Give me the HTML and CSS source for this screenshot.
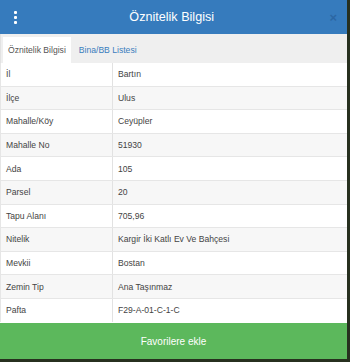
FILE: index.html
```html
<!DOCTYPE html>
<html lang="tr">
<head>
<meta charset="utf-8">
<title>Öznitelik Bilgisi</title>
<link rel="stylesheet" href="styles.css">
</head>
<body>
<div class="modal">
  <header class="modal-header">
    <span class="kebab"><i></i><i></i><i></i></span>
    <h1 class="title">Öznitelik Bilgisi</h1>
    <span class="close">×</span>
  </header>
  <nav class="tabs">
    <span class="tab active">Öznitelik Bilgisi</span>
    <span class="tab">Bina/BB Listesi</span>
  </nav>
  <table class="attr-table">
    <tbody>
      <tr><td>İl</td><td>Bartın</td></tr>
      <tr><td>İlçe</td><td>Ulus</td></tr>
      <tr><td>Mahalle/Köy</td><td>Ceyüpler</td></tr>
      <tr><td>Mahalle No</td><td>51930</td></tr>
      <tr><td>Ada</td><td>105</td></tr>
      <tr><td>Parsel</td><td>20</td></tr>
      <tr><td>Tapu Alanı</td><td>705,96</td></tr>
      <tr><td>Nitelik</td><td>Kargir İki Katlı Ev Ve Bahçesi</td></tr>
      <tr><td>Mevkii</td><td>Bostan</td></tr>
      <tr><td>Zemin Tip</td><td>Ana Taşınmaz</td></tr>
      <tr><td>Pafta</td><td>F29-A-01-C-1-C</td></tr>
    </tbody>
  </table>
  <button class="fav-btn">Favorilere ekle</button>
</div>
</body>
</html>
```
FILE: styles.css
```css
html, body {
  margin: 0;
  padding: 0;
}
body {
  width: 350px;
  height: 362px;
  background: #27301f;
  font-family: "Liberation Sans", Arial, sans-serif;
  overflow: hidden;
}
.modal {
  width: 347px;
  height: 359px;
  background: #fff;
  display: flex;
  flex-direction: column;
}
.modal-header {
  height: 34px;
  background: #367bbd;
  display: flex;
  align-items: center;
  position: relative;
}
.kebab {
  width: 4px;
  margin-left: 14px;
  display: flex;
  flex-direction: column;
  gap: 2px;
}
.kebab i {
  display: block;
  width: 3px;
  height: 3px;
  background: #fff;
  border-radius: 1px;
}
.title {
  flex: 1;
  margin: 0;
  text-align: center;
  color: #fff;
  font-weight: normal;
  font-size: 12.6px;
  padding-right: 4px;
}
.close {
  color: #2c67a4;
  font-size: 13px;
  font-weight: bold;
  margin-right: 10px;
  line-height: 1;
}
.tabs {
  height: 29px;
  background: #efefef;
  display: flex;
  align-items: flex-end;
  padding-left: 2px;
  border-left: 1px solid #e2e2e2;
}
.tab {
  font-size: 8.6px;
  color: #3a7dbd;
  height: 26px;
  line-height: 27px;
  padding: 0 5px;
  margin-right: 3px;
}
.tab.active {
  background: #fff;
  color: #555;
}
.attr-table {
  border-collapse: collapse;
  width: 100%;
  font-size: 8.6px;
  color: #444;
}
.attr-table td {
  height: 22.6px;
  padding: 0 5px;
  border-bottom: 1px solid #e6e6e6;
  vertical-align: middle;
}
.attr-table td:first-child {
  width: 101px;
  border-right: 1px solid #e2e2e2;
  border-left: 1px solid #e6e6e6;
}
.attr-table tr:nth-child(even) td {
  background: #f7f7f7;
}
.attr-table tr:last-child td {
  border-bottom: none;
}
.fav-btn {
  margin-top: auto;
  height: 36px;
  border: none;
  background: #5cb85c;
  color: #fff;
  font-family: inherit;
  font-size: 10px;
  width: 100%;
}
```
